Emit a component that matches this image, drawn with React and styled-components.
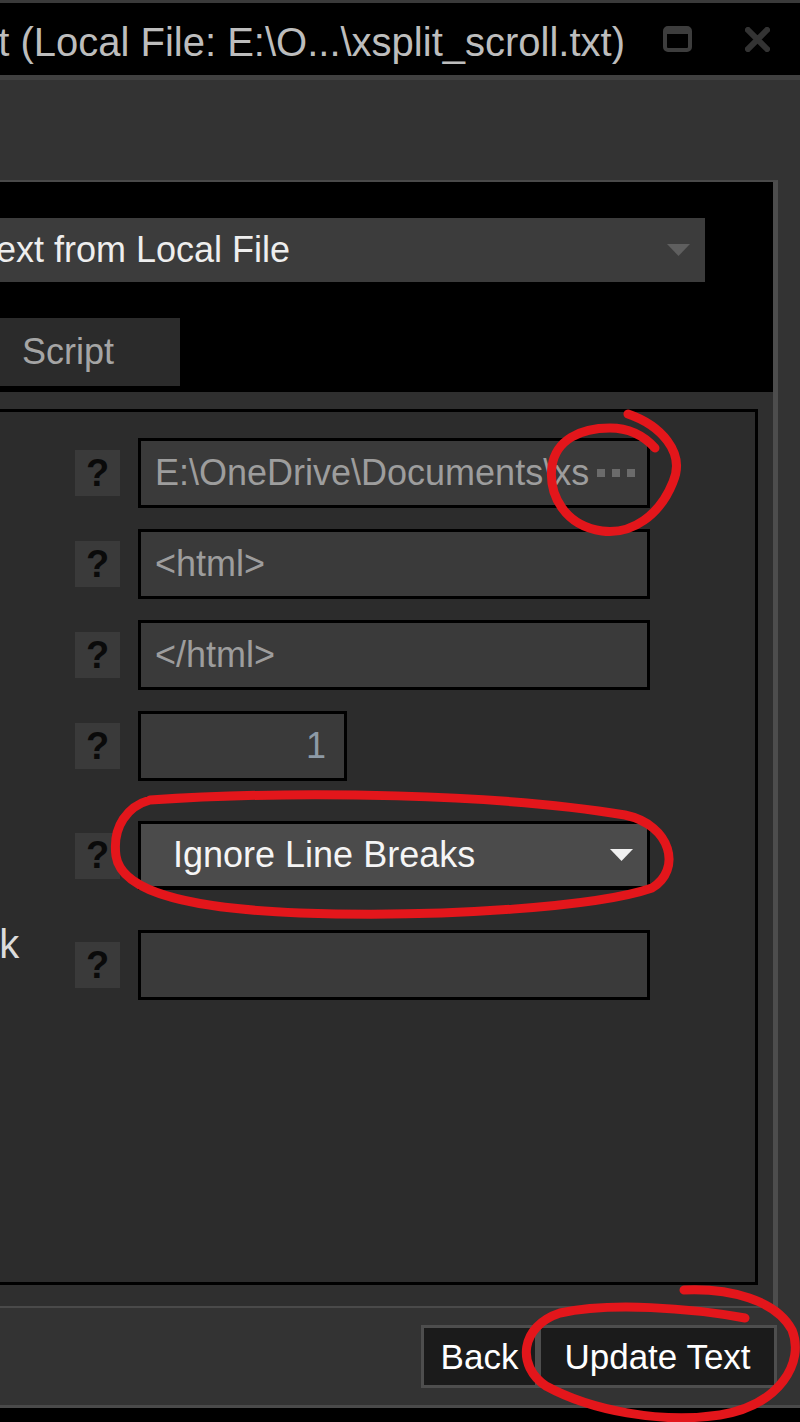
import React from "react";
import styled, { createGlobalStyle } from "styled-components";

const GlobalStyle = createGlobalStyle`
  html, body {
    margin: 0;
    padding: 0;
    background: #000;
  }
  body {
    font-family: "Liberation Sans", Arial, sans-serif;
  }
  #root {
    position: relative;
    width: 800px;
    height: 1422px;
    overflow: hidden;
  }
`;

// the screenshot only shows the right part of the window, so the dialog
// is wider than the viewport and pulled to the left
const Dialog = styled.div`
  width: 1000px;
  height: 1422px;
  margin-left: -200px;
  box-sizing: border-box;
  padding-bottom: 14px;
  display: flex;
  flex-direction: column;
  background: #000;
`;

const TitleBar = styled.div`
  height: 72px;
  flex-shrink: 0;
  border-top: 3px solid #3a3a3a;
  border-bottom: 5px solid #404040;
  background: #000;
  display: flex;
  align-items: center;
  justify-content: flex-end;
  padding-right: 30px;
`;

const Title = styled.div`
  flex-shrink: 0;
  white-space: nowrap;
  font-size: 40px;
  color: #bdbdbd;
  margin: 6px 38px 0 0;
`;

const WinButton = styled.svg`
  flex-shrink: 0;
  margin-left: ${(p) => p.$gap || 0}px;
`;

const Body = styled.div`
  flex: 1;
  display: flex;
  flex-direction: column;
  background: #333;
  padding: 100px 22px 0 12px;
  border-bottom: 3px solid #4a4a4a;
`;

const Panel = styled.div`
  flex: 1;
  display: flex;
  flex-direction: column;
  background: #2f2f2f;
  border-top: 2px solid #4a4a4a;
  border-bottom: 2px solid #4a4a4a;
  border-right: 5px solid #4d4d4d;
`;

const Header = styled.div`
  background: #000;
  padding: 36px 68px 6px 16px;
`;

const HeaderRow = styled.div`
  display: flex;
  align-items: center;
  gap: 12px;
`;

const SourceLabel = styled.div`
  width: 130px;
  font-size: 32px;
  color: #aaa;
`;

const SourceSelect = styled.div`
  flex: 1;
  height: 64px;
  background: #3c3c3c;
  display: flex;
  align-items: center;
  justify-content: space-between;
  padding: 0 15px 0 8px;
  font-size: 36px;
  color: #eee;
`;

const Tabs = styled.div`
  display: flex;
  margin-top: 36px;
`;

const Tab = styled.div`
  width: ${(p) => p.$w}px;
  height: 68px;
  box-sizing: border-box;
  padding-left: 22px;
  display: flex;
  align-items: center;
  background: ${(p) => (p.$active ? "#383838" : "#2b2b2b")};
  font-size: 36px;
  color: #a5a5a5;
`;

const Content = styled.div`
  flex: 1;
  display: flex;
  padding: 17px 15px 21px 13px;
`;

const InnerPanel = styled.div`
  flex: 1;
  display: flex;
  flex-direction: column;
  gap: 21px;
  border: 3px solid #000;
  background: #2c2c2c;
  padding: 26px 0 0 0;
`;

const Row = styled.div`
  display: grid;
  grid-template-columns: 229px 45px auto;
  column-gap: 18px;
  align-items: center;
  margin-top: ${(p) => (p.$spaced ? 19 : 0)}px;
`;

const Label = styled.div`
  align-self: start;
  margin-top: -6px;
  white-space: nowrap;
  font-size: 40px;
  line-height: 40px;
  color: #dcdcdc;
`;

const Help = styled.div`
  width: 45px;
  height: 46px;
  background: #3a3a3a;
  display: flex;
  align-items: center;
  justify-content: center;
  font-size: 38px;
  font-weight: bold;
  color: #0a0a0a;
`;

const Field = styled.div`
  width: ${(p) => p.$w}px;
  height: 64px;
  border: 3px solid #000;
  background: #3a3a3a;
  display: flex;
  align-items: center;
  justify-content: ${(p) => (p.$right ? "flex-end" : "flex-start")};
  padding: 0 ${(p) => (p.$right ? 18 : 0)}px 0 ${(p) => (p.$right ? 0 : 14)}px;
  font-size: 36px;
  color: ${(p) => (p.$right ? "#8d9aa6" : "#9d9d9d")};
`;

const FieldText = styled.div`
  flex: 1;
  overflow: hidden;
  white-space: nowrap;
`;

const Dots = styled.div`
  display: flex;
  gap: 7px;
  padding: 0 12px 0 7px;
`;

const Dot = styled.span`
  width: 8px;
  height: 8px;
  background: #6b6b6b;
`;

const Select = styled.div`
  width: 460px;
  height: 62px;
  border: 3px solid #000;
  border-bottom-width: 4px;
  background: #4b4b4b;
  display: flex;
  align-items: center;
  justify-content: space-between;
  padding: 0 14px 0 32px;
  font-size: 36px;
  color: #f5f5f5;
`;

const Footer = styled.div`
  height: 97px;
  display: flex;
  justify-content: flex-end;
  align-items: center;
  padding-right: 1px;
`;

const Button = styled.div`
  width: ${(p) => p.$w}px;
  height: 57px;
  border: 3px solid #4e4e4e;
  background: #1b1b1b;
  display: flex;
  align-items: center;
  justify-content: center;
  font-size: 35px;
  color: #fff;
`;

const Marks = styled.svg`
  position: absolute;
  top: 0;
  left: 0;
  pointer-events: none;
`;

const Arrow = ({ color }) => (
  <svg width="23" height="12" viewBox="0 0 23 12">
    <path d="M0 0 H23 L11.5 12 Z" fill={color} />
  </svg>
);

export default function App() {
  return (
    <>
      <GlobalStyle />
      <Dialog>
        <TitleBar>
          <Title>Text (Local File: E:\O...\xsplit_scroll.txt)</Title>
          <WinButton width="29" height="26" viewBox="0 0 29 26">
            <rect x="2" y="2" width="25" height="22" rx="3" fill="none" stroke="#3d3d3d" strokeWidth="4" />
            <rect x="2" y="2" width="25" height="6" fill="#3d3d3d" />
          </WinButton>
          <WinButton $gap={53} width="25" height="25" viewBox="0 0 25 25">
            <path d="M3 3 L22 22 M22 3 L3 22" stroke="#333" strokeWidth="6" strokeLinecap="square" />
          </WinButton>
        </TitleBar>

        <Body>
          <Panel>
            <Header>
              <HeaderRow>
                <SourceLabel>Source</SourceLabel>
                <SourceSelect>
                  <span>Text from Local File</span>
                  <Arrow color="#5f5f5f" />
                </SourceSelect>
              </HeaderRow>
              <Tabs>
                <Tab $w={172} $active>Text</Tab>
                <Tab $w={180}>Script</Tab>
              </Tabs>
            </Header>

            <Content>
              <InnerPanel>
                <Row>
                  <Label>File</Label>
                  <Help>?</Help>
                  <Field $w={492}>
                    <FieldText>E:\OneDrive\Documents\xsplit_scroll.txt</FieldText>
                    <Dots>
                      <Dot />
                      <Dot />
                      <Dot />
                    </Dots>
                  </Field>
                </Row>
                <Row>
                  <Label>Start</Label>
                  <Help>?</Help>
                  <Field $w={492}>&lt;html&gt;</Field>
                </Row>
                <Row>
                  <Label>End</Label>
                  <Help>?</Help>
                  <Field $w={492}>&lt;/html&gt;</Field>
                </Row>
                <Row>
                  <Label>Lines</Label>
                  <Help>?</Help>
                  <Field $w={185} $right>1</Field>
                </Row>
                <Row $spaced>
                  <Label>Mode</Label>
                  <Help>?</Help>
                  <Select>
                    <span>Ignore Line Breaks</span>
                    <Arrow color="#f0f0f0" />
                  </Select>
                </Row>
                <Row $spaced>
                  <Label>Line Break</Label>
                  <Help>?</Help>
                  <Field $w={492} />
                </Row>
              </InnerPanel>
            </Content>
          </Panel>

          <Footer>
            <Button $w={111}>Back</Button>
            <Button $w={233}>Update Text</Button>
          </Footer>
        </Body>
      </Dialog>

      <Marks width="800" height="1422" viewBox="0 0 800 1422">
        <g fill="none" stroke="#e3161b" strokeWidth="9" strokeLinecap="round" strokeLinejoin="round">
          <path d="M628 414 C660 425 686 452 673 482 C660 515 632 535 602 531 C566 526 548 496 552 466 C556 440 580 428 610 428 C630 428 645 437 655 448" />
          <path d="M150 800 C300 790 500 794 625 815 C672 825 682 870 652 888 C600 906 450 918 300 913 C200 909 122 895 116 856 C112 826 128 806 150 800" />
          <path d="M684 1290 C730 1288 776 1300 792 1330 C805 1362 780 1405 720 1415 C660 1424 590 1410 546 1386 C516 1366 520 1326 560 1313 C610 1302 690 1308 745 1318" />
        </g>
      </Marks>
    </>
  );
}
